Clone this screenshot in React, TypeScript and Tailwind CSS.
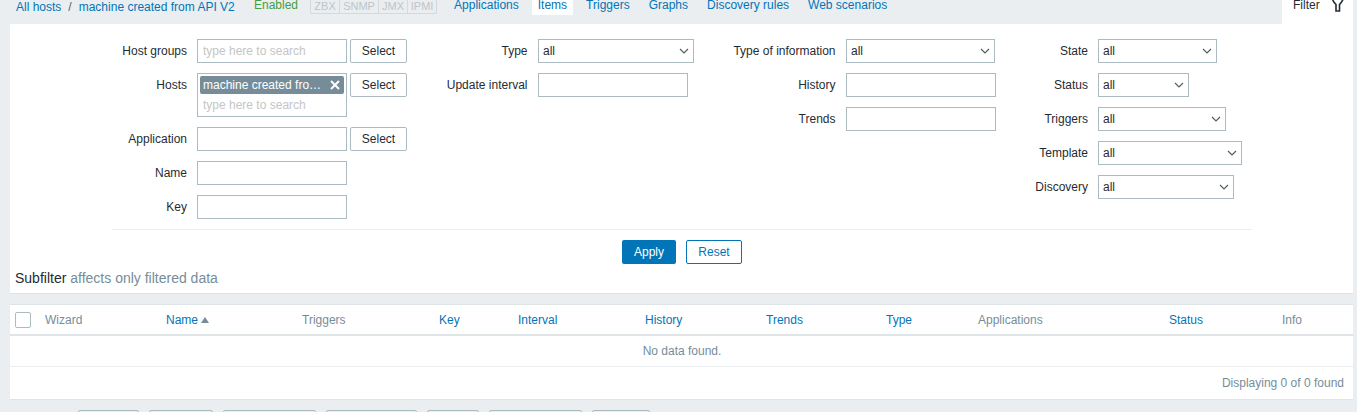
import { ReactNode } from "react";

const labelCls = "text-right text-[12px] leading-[24px] text-[#1f2c33] shrink-0";
const inputCls = "h-[24px] border border-[#acbbc2] bg-white px-[5px] text-[12px] text-[#1f2c33] outline-none placeholder:text-[#c5c5c5]";

function Chevron() {
  return (
    <svg width="10" height="6" viewBox="0 0 10 6" className="absolute right-[5px] top-[9px] pointer-events-none">
      <path d="M1 1l4 4 4-4" fill="none" stroke="#4f5f68" strokeWidth="1.2" />
    </svg>
  );
}

function Select({ width }: { width: string }) {
  return (
    <div className={`relative ${width}`}>
      <select className="h-[24px] w-full appearance-none border border-[#acbbc2] bg-white pl-[4px] text-[12px] text-[#1f2c33] outline-none">
        <option>all</option>
      </select>
      <Chevron />
    </div>
  );
}

function SelectBtn() {
  return (
    <button className="ml-[3px] h-[24px] w-[57px] rounded-[2px] border border-[#acbbc2] bg-white text-[12px] text-[#1f2c33]">
      Select
    </button>
  );
}

function Row({ label, labelWidth, children }: { label: string; labelWidth: string; children: ReactNode }) {
  return (
    <div className="flex items-start">
      <div className={`${labelCls} ${labelWidth}`}>{label}</div>
      <div className="ml-[10px] flex items-start">{children}</div>
    </div>
  );
}

function Link({ children, className = "" }: { children: ReactNode; className?: string }) {
  return <a className={`text-[#0275b8] ${className}`}>{children}</a>;
}

const columns = [
  { name: "Wizard", w: "w-[121px]", link: false },
  { name: "Name", w: "w-[136px]", link: true, sort: true },
  { name: "Triggers", w: "w-[137px]", link: false },
  { name: "Key", w: "w-[79px]", link: true },
  { name: "Interval", w: "w-[127px]", link: true },
  { name: "History", w: "w-[121px]", link: true },
  { name: "Trends", w: "w-[120px]", link: true },
  { name: "Type", w: "w-[92px]", link: true },
  { name: "Applications", w: "w-[191px]", link: false },
  { name: "Status", w: "w-[113px]", link: true },
  { name: "Info", w: "w-[50px]", link: false },
];

const bottomButtons = [
  { w: "w-[61px]" },
  { w: "w-[64px]" },
  { w: "w-[93px]" },
  { w: "w-[91px]" },
  { w: "w-[52px]" },
  { w: "w-[93px]" },
  { w: "w-[58px]" },
];

export default function App() {
  return (
    <div className="h-[412px] w-[1357px] overflow-hidden bg-[#ebeef0] pl-[10px] pr-[4px] text-[12px] text-[#1f2c33]" style={{ fontFamily: '"Liberation Sans", Arial, sans-serif' }}>
      {/* top nav */}
      <div className="flex h-[24px] items-start">
        <div className="flex h-[23px] flex-1 items-start">
          <div className="ml-[6px] flex w-[238px] pt-[1px] leading-[12px]">
            <Link>All hosts</Link>
            <span className="ml-[7px] mr-[7px] text-[#4f5f68]">/</span>
            <Link>machine created from API V2</Link>
          </div>
          <span className="text-[#429e47] leading-[11px]">Enabled</span>
          <div className="ml-[12px] flex h-[15px] -mt-[1px] rounded-[2px] border border-[#d3d9dc] text-[11px] leading-[13px] text-[#bcc5ca]">
            <span className="w-[29px] border-r border-[#d3d9dc] text-center">ZBX</span>
            <span className="w-[39px] border-r border-[#d3d9dc] text-center">SNMP</span>
            <span className="w-[29px] border-r border-[#d3d9dc] text-center">JMX</span>
            <span className="w-[28px] text-center">IPMI</span>
          </div>
          <div className="ml-[17px] flex leading-[11px]">
            <Link className="mr-[13px]">Applications</Link>
            <Link className="mr-[13px] h-[15px] bg-white px-[6px]">Items</Link>
            <Link className="mr-[19px]">Triggers</Link>
            <Link className="mr-[19px]">Graphs</Link>
            <Link className="mr-[19px]">Discovery rules</Link>
            <Link>Web scenarios</Link>
          </div>
        </div>
        <div className="flex h-[24px] w-[71px] bg-white pl-[11px] leading-[11px]">
          <span>Filter</span>
          <svg width="14" height="13" viewBox="0 0 14 13" className="ml-[11px] -mt-[1px]">
            <path d="M1.5 0.5c1 2.500 2.500 4 3.500 5v6.500h3.500V5.500c1-1 2.500-3 3.500-5" fill="none" stroke="#1f2c33" strokeWidth="1.6" />
          </svg>
        </div>
      </div>

      {/* filter panel */}
      <div className="h-[270px] border-b border-[#dfe4e7] bg-white pt-[15px]">
        <div className="flex h-[190px] items-start">
          <div className="flex w-[397px] flex-col gap-[10px]">
            <Row label="Host groups" labelWidth="w-[177px]">
              <input className={`${inputCls} w-[150px]`} placeholder="type here to search" />
              <SelectBtn />
            </Row>
            <Row label="Hosts" labelWidth="w-[177px]">
              <div className="h-[44px] w-[150px] border border-[#acbbc2] bg-white">
                <div className="mx-[2px] mt-[2px] flex h-[18px] items-center justify-between rounded-[2px] bg-[#768d99] pl-[3px] pr-[4px] text-white">
                  <span className="leading-[18px]">machine created fro…</span>
                  <svg width="10" height="10" viewBox="0 0 10 10">
                    <path d="M1 1l8 8M9 1l-8 8" stroke="#fff" strokeWidth="2" />
                  </svg>
                </div>
                <div className="pl-[5px] pt-[4px] leading-[14px] text-[#c5c5c5]">type here to search</div>
              </div>
              <SelectBtn />
            </Row>
            <Row label="Application" labelWidth="w-[177px]">
              <input className={`${inputCls} w-[150px]`} />
              <SelectBtn />
            </Row>
            <Row label="Name" labelWidth="w-[177px]">
              <input className={`${inputCls} w-[150px]`} />
            </Row>
            <Row label="Key" labelWidth="w-[177px]">
              <input className={`${inputCls} w-[150px]`} />
            </Row>
          </div>

          <div className="flex w-[306px] flex-col gap-[10px]">
            <Row label="Type" labelWidth="w-[120.5px]">
              <div className="ml-[0.5px]"><Select width="w-[156px]" /></div>
            </Row>
            <Row label="Update interval" labelWidth="w-[120.5px]">
              <input className={`${inputCls} ml-[0.5px] w-[150px]`} />
            </Row>
          </div>

          <div className="flex w-[285px] flex-col gap-[10px]">
            <Row label="Type of information" labelWidth="w-[122.5px]">
              <div className="ml-[0.5px]"><Select width="w-[149px]" /></div>
            </Row>
            <Row label="History" labelWidth="w-[122.5px]">
              <input className={`${inputCls} ml-[0.5px] w-[150px]`} />
            </Row>
            <Row label="Trends" labelWidth="w-[122.5px]">
              <input className={`${inputCls} ml-[0.5px] w-[150px]`} />
            </Row>
          </div>

          <div className="flex flex-col gap-[10px]">
            <Row label="State" labelWidth="w-[90px]"><Select width="w-[119px]" /></Row>
            <Row label="Status" labelWidth="w-[90px]"><Select width="w-[91px]" /></Row>
            <Row label="Triggers" labelWidth="w-[90px]"><Select width="w-[128px]" /></Row>
            <Row label="Template" labelWidth="w-[90px]"><Select width="w-[144px]" /></Row>
            <Row label="Discovery" labelWidth="w-[90px]"><Select width="w-[136px]" /></Row>
          </div>
        </div>

        <div className="ml-[102px] w-[1140px] border-t border-[#ebeef0]" />

        <div className="mt-[10px] flex justify-center gap-[10px]">
          <button className="h-[24px] w-[54px] rounded-[2px] bg-[#0275b8] pl-[1px] text-white">Apply</button>
          <button className="h-[24px] w-[56px] rounded-[2px] border border-[#0275b8] bg-white pl-[1px] text-[#0275b8]">Reset</button>
        </div>

        <div className="mt-[5px] pl-[5px] text-[14px] leading-[18px]">
          Subfilter <span className="text-[#768d99]">affects only filtered data</span>
        </div>
      </div>

      {/* items table */}
      <div className="mt-[10px] h-[96px] border-y border-[#dfe4e7] bg-white">
        <div className="flex h-[31px] items-center border-b-2 border-[#dfe4e7]">
          <div className="w-[35px] pl-[5px]">
            <div className="h-[16px] w-[16px] rounded-[2px] border border-[#acbbc2] bg-white" />
          </div>
          {columns.map((c) => (
            <div key={c.name} className={`flex items-center ${c.w} ${c.link ? "text-[#0275b8]" : "text-[#768d99]"}`}>
              {c.name}
              {c.sort && (
                <svg width="8" height="6" viewBox="0 0 8 6" className="ml-[3px]">
                  <path d="M4 0l4 6H0z" fill="#768d99" />
                </svg>
              )}
            </div>
          ))}
        </div>
        <div className="flex h-[31px] items-center justify-center border-b border-[#ebeef0] pl-[1px] text-[#768d99]">No data found.</div>
        <div className="flex h-[32px] items-center justify-end pr-[9px] text-[#768d99]">Displaying 0 of 0 found</div>
      </div>

      {/* mass action buttons */}
      <div className="ml-[68px] mt-[10px] flex gap-[10px]">
        {bottomButtons.map((b, i) => (
          <div key={i} className={`h-[24px] rounded-[2px] border border-[#acbbc2] bg-[#ebeef0] ${b.w}`} />
        ))}
      </div>
    </div>
  );
}
